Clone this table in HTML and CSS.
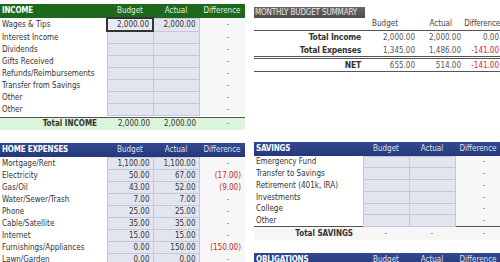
FILE: index.html
```html
<!DOCTYPE html>
<html>
<head>
<meta charset="utf-8">
<link rel="stylesheet" href="styles.css">
</head>
<body>
<div class="page">
  <div class="col">
    <table class="sheet income">
      <colgroup><col class="c-label"><col class="c-num"><col class="c-num"><col class="c-num"></colgroup>
      <tr class="head"><th class="name">INCOME</th><th>Budget</th><th>Actual</th><th>Difference</th></tr>
      <tr><td>Wages &amp; Tips</td><td class="in sel">2,000.00</td><td class="in">2,000.00</td><td class="diff">-</td></tr>
      <tr><td>Interest Income</td><td class="in"></td><td class="in"></td><td class="diff">-</td></tr>
      <tr><td>Dividends</td><td class="in"></td><td class="in"></td><td class="diff">-</td></tr>
      <tr><td>Gifts Received</td><td class="in"></td><td class="in"></td><td class="diff">-</td></tr>
      <tr><td>Refunds/Reimbursements</td><td class="in"></td><td class="in"></td><td class="diff">-</td></tr>
      <tr><td>Transfer from Savings</td><td class="in"></td><td class="in"></td><td class="diff">-</td></tr>
      <tr><td>Other</td><td class="in"></td><td class="in"></td><td class="diff">-</td></tr>
      <tr><td>Other</td><td class="in"></td><td class="in"></td><td class="diff">-</td></tr>
      <tr class="spacer"><td colspan="4"></td></tr>
      <tr class="total green"><td class="tlabel">Total INCOME</td><td class="num">2,000.00</td><td class="num">2,000.00</td><td class="diff">-</td></tr>
    </table>

    <table class="sheet expenses">
      <colgroup><col class="c-label"><col class="c-num"><col class="c-num"><col class="c-num"></colgroup>
      <tr class="head blue"><th class="name">HOME EXPENSES</th><th>Budget</th><th>Actual</th><th>Difference</th></tr>
      <tr><td>Mortgage/Rent</td><td class="in">1,100.00</td><td class="in">1,100.00</td><td class="diff">-</td></tr>
      <tr><td>Electricity</td><td class="in">50.00</td><td class="in">67.00</td><td class="diff neg">(17.00)</td></tr>
      <tr><td>Gas/Oil</td><td class="in">43.00</td><td class="in">52.00</td><td class="diff neg">(9.00)</td></tr>
      <tr><td>Water/Sewer/Trash</td><td class="in">7.00</td><td class="in">7.00</td><td class="diff">-</td></tr>
      <tr><td>Phone</td><td class="in">25.00</td><td class="in">25.00</td><td class="diff">-</td></tr>
      <tr><td>Cable/Satellite</td><td class="in">35.00</td><td class="in">35.00</td><td class="diff">-</td></tr>
      <tr><td>Internet</td><td class="in">15.00</td><td class="in">15.00</td><td class="diff">-</td></tr>
      <tr><td>Furnishings/Appliances</td><td class="in">0.00</td><td class="in">150.00</td><td class="diff neg">(150.00)</td></tr>
      <tr><td>Lawn/Garden</td><td class="in">0.00</td><td class="in">0.00</td><td class="diff">-</td></tr>
    </table>
  </div>

  <div class="col right">
    <div class="summary">
      <div class="sum-title">MONTHLY BUDGET SUMMARY</div>
      <div class="sum-head">
        <span></span><span>Budget</span><span>Actual</span><span>Difference</span>
      </div>
      <div class="sum-row">
        <span class="slabel">Total Income</span><span>2,000.00</span><span>2,000.00</span><span>0.00</span>
      </div>
      <div class="sum-row before-net">
        <span class="slabel">Total Expenses</span><span>1,345.00</span><span>1,486.00</span><span class="red">-141.00</span>
      </div>
      <div class="sum-row net">
        <span class="slabel">NET</span><span>655.00</span><span>514.00</span><span class="red">-141.00</span>
      </div>
    </div>

    <table class="sheet savings">
      <colgroup><col class="r-label"><col class="r-num"><col class="r-num"><col class="r-num"></colgroup>
      <tr class="head blue"><th class="name">SAVINGS</th><th>Budget</th><th>Actual</th><th>Difference</th></tr>
      <tr><td>Emergency Fund</td><td class="in"></td><td class="in"></td><td class="diff">-</td></tr>
      <tr><td>Transfer to Savings</td><td class="in"></td><td class="in"></td><td class="diff">-</td></tr>
      <tr><td>Retirement (401k, IRA)</td><td class="in"></td><td class="in"></td><td class="diff">-</td></tr>
      <tr><td>Investments</td><td class="in"></td><td class="in"></td><td class="diff">-</td></tr>
      <tr><td>College</td><td class="in"></td><td class="in"></td><td class="diff">-</td></tr>
      <tr><td>Other</td><td class="in"></td><td class="in"></td><td class="diff">-</td></tr>
      <tr class="total plain"><td class="tlabel">Total SAVINGS</td><td class="dash">-</td><td class="dash">-</td><td class="diff">-</td></tr>
    </table>

    <table class="sheet obligations">
      <colgroup><col class="r-label"><col class="r-num"><col class="r-num"><col class="r-num"></colgroup>
      <tr class="head blue"><th class="name">OBLIGATIONS</th><th>Budget</th><th>Actual</th><th>Difference</th></tr>
    </table>
  </div>
</div>
</body>
</html>
```

FILE: styles.css
```css
* { box-sizing: border-box; }
html, body { margin: 0; padding: 0; background: #fff; }
body {
  font-family: Tahoma, "DejaVu Sans Condensed", "Liberation Sans", sans-serif;
  font-size: 8px;
  color: #2a2a2a;
  width: 500px;
  height: 262px;
  overflow: hidden;
}
.page {
  display: grid;
  grid-template-columns: 245px 246px;
  column-gap: 9px;
  align-items: start;
  padding-top: 4px;
}
.col { display: block; }

table { border-collapse: collapse; table-layout: fixed; }
.sheet { width: 100%; }
.c-label { width: 107px; }
.c-num { width: 46px; }
.r-label { width: 109px; }
.r-num { width: 46px; }

.sheet td, .sheet th {
  height: 12px;
  padding: 1px 2px 0;
  line-height: 10px;
  white-space: nowrap;
  overflow: hidden;
}
.expenses td, .savings td { height: 11.75px; }
.head th {
  height: 14px;
  padding-top: 0;
  background: #1d681d;
  color: #e4efe4;
  font-weight: normal;
  text-align: center;
}
.head th.name {
  text-align: left;
  color: #fff;
  font-weight: bold;
  letter-spacing: -0.2px;
}
.head.blue th {
  background: linear-gradient(#34488f, #243879);
  color: #dfe3f0;
}
.head.blue th.name { color: #fff; }

.sheet td { color: #333; }
td.in {
  background: #e2e5ef;
  border: 1px solid #c3c7d6;
  text-align: right;
  padding-right: 3px;
}
td.in.sel {
  border: 2px solid #333;
  background: #e8eaf1;
}
td.diff {
  text-align: right;
  padding-right: 16px;
  background: #f7f7f7;
  color: #777;
}
td.diff.neg { color: #c0262c; padding-right: 4px; }
td.dash { text-align: right; padding-right: 22px; color: #777; }

.spacer td { height: 2px; padding: 0; }
.total td {
  border-top: 1px solid #555;
  height: 13px;
}
.total.green td { background: #dcf3dc; }
.total td.tlabel {
  text-align: right;
  font-weight: bold;
  padding-right: 10px;
  color: #333;
}
.total td.num { text-align: right; padding-right: 3px; color: #333; }
.total.green td.diff { background: #dcf3dc; }
.total.plain td, .total.plain td.diff { background: #f6f6f6; }

.income { margin-bottom: 13px; }

/* summary */
.summary { height: 138px; padding-top: 3px; }
.sum-title {
  width: 111px;
  height: 11px;
  line-height: 11px;
  background: linear-gradient(#666, #4e4e4e);
  color: #e6e6e6;
  font-size: 8px;
  padding-left: 1px;
  letter-spacing: -0.15px;
  white-space: nowrap;
  overflow: hidden;
}
.sum-head, .sum-row {
  display: grid;
  grid-template-columns: 108px 54px 46px 38px;
  align-items: center;
  white-space: nowrap;
}
.sum-head > span, .sum-row > span { text-align: right; }
.sum-head {
  height: 13px;
  align-items: end;
  padding-bottom: 1px;
  line-height: 10px;
  color: #444;
  border-bottom: 1px solid #555;
}
.sum-head > span:nth-child(2) { padding-right: 18px; }
.sum-head > span:nth-child(3) { padding-right: 10px; }
.sum-head > span:nth-child(4) { letter-spacing: -0.15px; }
.sum-row {
  height: 13px;
  line-height: 11px;
  color: #555;
}
.sum-row > span { padding-right: 1px; }
.sum-row > span.slabel {
  font-weight: bold;
  font-size: 8.5px;
  color: #333;
  letter-spacing: -0.2px;
}
.sum-row > span.red { color: #d8262c; }
.sum-row.before-net { height: 15px; border-bottom: 3px double #555; padding-top: 1px; }
.sum-row.net { height: 13px; border-bottom: 1px solid #555; }

.savings { margin-bottom: 13px; }
```
